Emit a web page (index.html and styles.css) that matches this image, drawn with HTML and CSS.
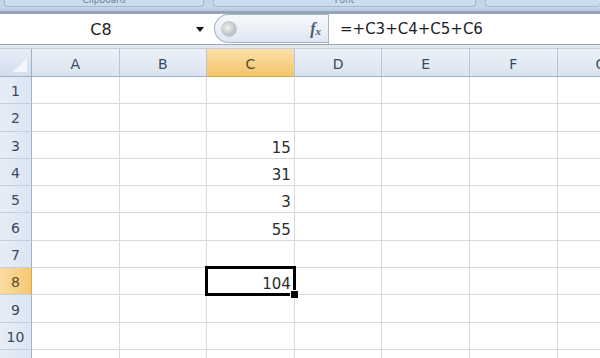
FILE: index.html
```html
<!DOCTYPE html>
<html lang="en">
  <head>
    <meta charset="utf8">
    <meta name="viewport" content="width=device-width, initial-scale=1">
    <title>Sheet1 - Sum</title>
    <link rel="stylesheet" href="styles.css">
  </head>

  <body>
    <div class="ribbon">
      <div class="group group-clipboard">Clipboard</div>
      <div class="group group-font">Font</div>
      <div class="group group-rest"></div>
    </div>
    <div class="ribbon-edge"></div>

    <div class="formula-bar">
      <div class="name-box">
        <span class="name">C8</span>
        <span class="arrow"></span>
      </div>
      <div class="fx-pill">
        <span class="knob"></span>
        <span class="fx">f<sub>x</sub></span>
      </div>
      <div class="formula">=+C3+C4+C5+C6</div>
    </div>
    <div class="bar-gap"></div>

    <div class="sheet">
      <div class="corner"></div>
      <div class="ch">A</div>
      <div class="ch">B</div>
      <div class="ch selected">C</div>
      <div class="ch">D</div>
      <div class="ch">E</div>
      <div class="ch">F</div>
      <div class="ch">G</div>

      <div class="rh">1</div><div class="cell"></div><div class="cell"></div><div class="cell"></div><div class="cell"></div><div class="cell"></div><div class="cell"></div><div class="cell"></div>
      <div class="rh">2</div><div class="cell"></div><div class="cell"></div><div class="cell"></div><div class="cell"></div><div class="cell"></div><div class="cell"></div><div class="cell"></div>
      <div class="rh">3</div><div class="cell"></div><div class="cell"></div><div class="cell">15</div><div class="cell"></div><div class="cell"></div><div class="cell"></div><div class="cell"></div>
      <div class="rh">4</div><div class="cell"></div><div class="cell"></div><div class="cell">31</div><div class="cell"></div><div class="cell"></div><div class="cell"></div><div class="cell"></div>
      <div class="rh">5</div><div class="cell"></div><div class="cell"></div><div class="cell">3</div><div class="cell"></div><div class="cell"></div><div class="cell"></div><div class="cell"></div>
      <div class="rh">6</div><div class="cell"></div><div class="cell"></div><div class="cell">55</div><div class="cell"></div><div class="cell"></div><div class="cell"></div><div class="cell"></div>
      <div class="rh">7</div><div class="cell"></div><div class="cell"></div><div class="cell"></div><div class="cell"></div><div class="cell"></div><div class="cell"></div><div class="cell"></div>
      <div class="rh selected">8</div><div class="cell"></div><div class="cell"></div><div class="cell active">104<span class="handle"></span></div><div class="cell"></div><div class="cell"></div><div class="cell"></div><div class="cell"></div>
      <div class="rh">9</div><div class="cell"></div><div class="cell"></div><div class="cell"></div><div class="cell"></div><div class="cell"></div><div class="cell"></div><div class="cell"></div>
      <div class="rh">10</div><div class="cell"></div><div class="cell"></div><div class="cell"></div><div class="cell"></div><div class="cell"></div><div class="cell"></div><div class="cell"></div>
      <div class="rh">11</div><div class="cell"></div><div class="cell"></div><div class="cell"></div><div class="cell"></div><div class="cell"></div><div class="cell"></div><div class="cell"></div>
    </div>
  </body>
</html>
```

FILE: styles.css
```css
html, body {
  margin: 0;
  width: 600px;
  height: 358px;
  overflow: hidden;
  background: #fff;
  font-family: "DejaVu Sans", sans-serif;
  color: #2b2b2b;
}

/* ribbon remains */
.ribbon {
  display: flex;
  gap: 9px;
  height: 7px;
  padding-left: 4px;
  background: #c4d5eb;
}
.group {
  box-sizing: border-box;
  height: 7px;
  border: 1px solid #a4b8d2;
  border-top: none;
  border-radius: 0 0 4px 4px;
  background: #ccdcf0;
  color: #6d7e95;
  font-size: 9px;
  line-height: 0;
  text-align: center;
  overflow: hidden;
}
.group-clipboard { width: 200px; }
.group-font { width: 263px; }
.group-rest { flex: 1; border-right: none; }

.ribbon-edge {
  height: 7px;
  box-sizing: border-box;
  background: linear-gradient(#c9d7e8, #b7c6d9);
  border-bottom: 3px solid #94a5bb;
}

/* formula bar */
.formula-bar {
  display: flex;
  height: 30px;
  background: #fff;
  border-bottom: 1px solid #9aa7b7;
}
.name-box {
  display: flex;
  align-items: center;
  width: 214px;
}
.name {
  flex: 1;
  text-align: center;
  font-size: 16px;
  color: #222;
  padding-left: 6px;
}
.arrow {
  width: 0;
  height: 0;
  margin-right: 10px;
  border-left: 4px solid transparent;
  border-right: 4px solid transparent;
  border-top: 5px solid #111;
}
.fx-pill {
  display: flex;
  align-items: center;
  justify-content: space-between;
  box-sizing: border-box;
  width: 114px;
  height: 29px;
  margin-top: 0;
  border: 1px solid #a3b3c8;
  border-right: none;
  border-radius: 15px 0 0 15px;
  background: linear-gradient(#f7f9fc, #dfe7f2);
}
.knob {
  width: 14px;
  height: 14px;
  margin-left: 6px;
  border-radius: 50%;
  background: radial-gradient(circle at 40% 40%, #f2f2f2, #b9bdc3 70%);
  border: 1px solid #c7ccd3;
}
.fx {
  margin-right: 7px;
  font-family: "Liberation Serif", serif;
  font-style: italic;
  font-weight: bold;
  font-size: 16px;
  color: #4b5d77;
}
.fx sub {
  font-size: 11px;
  vertical-align: -1px;
}
.formula {
  flex: 1;
  display: flex;
  align-items: center;
  padding-left: 11px;
  border-left: 1px solid #a9b6c6;
  font-size: 15px;
  color: #1e1e1e;
}

.bar-gap {
  height: 3px;
  background: #e3e8ef;
  border-bottom: 1px solid #c6ceda;
}

/* grid */
.sheet {
  display: grid;
  grid-template-columns: 32px repeat(7, 87.6px);
  grid-template-rows: 28px repeat(11, 27.3px);
}
.corner, .ch, .rh, .cell {
  box-sizing: border-box;
  border-right: 1px solid #d6d9de;
  border-bottom: 1px solid #d6d9de;
}
.corner {
  position: relative;
  background: linear-gradient(#e6edf7, #d3deec);
  border-right-color: #9fb2c9;
  border-bottom-color: #9fb2c9;
}
.corner::after {
  content: "";
  position: absolute;
  right: 4px;
  bottom: 4px;
  border-left: 14px solid transparent;
  border-bottom: 14px solid #f4f7fb;
}
.ch {
  display: flex;
  align-items: center;
  justify-content: center;
  padding-top: 2px;
  background: linear-gradient(#edf2f9, #dae3ef);
  border-right-color: #b6c5d7;
  border-bottom-color: #9fb2c9;
  font-size: 14px;
  color: #3a4a5e;
}
.rh {
  display: flex;
  align-items: center;
  justify-content: center;
  padding-top: 2px;
  background: linear-gradient(90deg, #e6edf7, #dce5f1);
  border-right-color: #9fb2c9;
  border-bottom-color: #c3cfdd;
  font-size: 14px;
  color: #3a4a5e;
}
.ch.selected {
  background: linear-gradient(#fbe0ab, #f4c46a);
  border-bottom-color: #e0a53c;
  color: #5b4a2c;
}
.rh.selected {
  background: linear-gradient(90deg, #fbdca2, #f5c771);
  border-right-color: #e0a53c;
  color: #5b4a2c;
}
.cell {
  display: flex;
  align-items: flex-end;
  justify-content: flex-end;
  padding: 0 3px 1px 0;
  font-size: 15px;
  color: #2b2b2b;
}
.cell.active {
  position: relative;
}
.cell.active::before {
  content: "";
  position: absolute;
  left: -2px;
  top: -2px;
  right: -2px;
  bottom: -2px;
  border: 3px solid #000;
}
.handle {
  position: absolute;
  right: -5px;
  bottom: -5px;
  width: 7px;
  height: 7px;
  background: #000;
  border: 1px solid #fff;
  z-index: 1;
}
```
